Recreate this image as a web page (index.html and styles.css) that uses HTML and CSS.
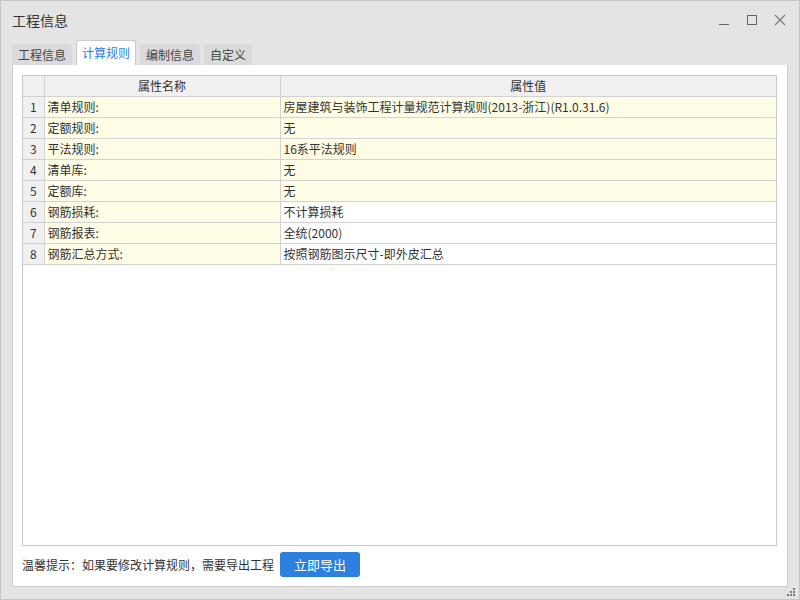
FILE: index.html
```html
<!DOCTYPE html>
<html lang="zh">
<head>
<meta charset="utf-8">
<title>工程信息</title>
<link rel="stylesheet" href="styles.css">
</head>
<body>
<div class="window">
  <div class="titlebar">
    <div class="title">工程信息</div>
    <div class="controls">
      <svg class="ctl" width="12" height="12" viewBox="0 0 12 12"><path d="M1 10.5H11" stroke="#666" stroke-width="1" fill="none"/></svg>
      <svg class="ctl" width="12" height="12" viewBox="0 0 12 12"><rect x="1.5" y="1.5" width="9" height="9" stroke="#666" stroke-width="1" fill="none"/></svg>
      <svg class="ctl" width="12" height="12" viewBox="0 0 12 12"><path d="M1 1L11 11M11 1L1 11" stroke="#777" stroke-width="1.1" fill="none"/></svg>
    </div>
  </div>
  <div class="tabs">
    <div class="tab">工程信息</div>
    <div class="tab active">计算规则</div>
    <div class="tab">编制信息</div>
    <div class="tab">自定义</div>
  </div>
  <div class="panel">
    <div class="grid-box">
      <table class="grid">
        <colgroup><col class="c-num"><col class="c-name"><col class="c-val"></colgroup>
        <thead>
          <tr><th class="num"></th><th>属性名称</th><th>属性值</th></tr>
        </thead>
        <tbody>
          <tr class="hl"><td class="num">1</td><td class="name">清单规则:</td><td class="val">房屋建筑与装饰工程计量规范计算规则(2013-浙江)(R1.0.31.6)</td></tr>
          <tr class="hl"><td class="num">2</td><td class="name">定额规则:</td><td class="val">无</td></tr>
          <tr class="hl"><td class="num">3</td><td class="name">平法规则:</td><td class="val">16系平法规则</td></tr>
          <tr class="hl"><td class="num">4</td><td class="name">清单库:</td><td class="val">无</td></tr>
          <tr class="hl"><td class="num">5</td><td class="name">定额库:</td><td class="val">无</td></tr>
          <tr><td class="num">6</td><td class="name">钢筋损耗:</td><td class="val">不计算损耗</td></tr>
          <tr><td class="num">7</td><td class="name">钢筋报表:</td><td class="val">全统(2000)</td></tr>
          <tr><td class="num">8</td><td class="name">钢筋汇总方式:</td><td class="val">按照钢筋图示尺寸-即外皮汇总</td></tr>
        </tbody>
      </table>
    </div>
    <div class="footer">
      <span class="tip">温馨提示：如果要修改计算规则，需要导出工程</span>
      <button class="btn">立即导出</button>
    </div>
  </div>
  <div class="grip"><i></i><i></i><i></i><i></i><i></i><i></i></div>
</div>
</body>
</html>
```
FILE: styles.css
```css
* { box-sizing: border-box; }
html, body { margin: 0; padding: 0; }
body {
  width: 800px;
  height: 600px;
  font-family: "Noto Sans CJK SC", "Noto Sans", sans-serif;
  color: #333;
  font-size: 12px;
}
.window {
  position: relative;
  width: 800px;
  height: 600px;
  background: #e4e4e4;
  border: 1px solid #c6c6c6;
  display: flex;
  flex-direction: column;
}
.titlebar {
  height: 39px;
  display: flex;
  align-items: center;
  justify-content: space-between;
  padding: 0 13px 0 11px;
}
.title {
  font-size: 14px;
  line-height: 20px;
  color: #333;
  margin-top: -2px;
}
.controls {
  display: flex;
  gap: 16px;
  align-items: center;
  margin-top: -2px;
}
.ctl { display: block; }
.tabs {
  height: 25px;
  display: flex;
  align-items: flex-end;
  gap: 4px;
  padding-left: 11px;
}
.tab {
  height: 21px;
  line-height: 20px;
  padding: 0 5px;
  background: #dadada;
  border: 1px solid transparent;
  border-bottom: none;
  border-radius: 3px 3px 0 0;
  color: #444;
  font-size: 12px;
}
.tab.active {
  height: 25px;
  line-height: 23px;
  background: #fff;
  border-color: #c8c8c8;
  color: #2b7fe0;
}
.panel {
  margin: 0 11px 0 11px;
  background: #fff;
  border: 1px solid #cbcbcb;
  border-top: none;
  height: 522px;
  padding: 10px 10px 0 9px;
  display: flex;
  flex-direction: column;
}
.grid-box {
  height: 471px;
  border: 1px solid #c8c8c8;
  background: #fff;
}
.grid {
  border-collapse: collapse;
  width: 100%;
  table-layout: fixed;
  font-size: 12px;
}
.c-num { width: 21px; }
.c-name { width: 236px; }
.grid th, .grid td {
  height: 21px;
  padding: 0 3px;
  border: 1px solid #d2d2d2;
  white-space: nowrap;
  overflow: hidden;
  line-height: 19px;
}
.grid tr > :first-child { border-left: none; }
.grid tr > :last-child { border-right: none; }
.grid thead th {
  border-top: none;
  background: #f0f0f0;
  font-weight: normal;
  text-align: center;
  color: #333;
  height: 20px;
}
.grid td.num {
  background: #f0f0f0;
  text-align: center;
  padding: 0;
}
.grid td.name { background: #fffde6; }
.grid tr.hl td.val { background: #fffde6; }
.footer {
  height: 40px;
  display: flex;
  align-items: center;
  gap: 6px;
  padding-bottom: 3px;
}
.tip {
  font-size: 12px;
  color: #333;
}
.btn {
  width: 80px;
  height: 25px;
  border: none;
  border-radius: 3px;
  background: #2d80e0;
  color: #fff;
  font-family: inherit;
  font-size: 13px;
  padding: 0;
}
.grip {
  position: absolute;
  right: 3px;
  bottom: 2px;
  width: 9px;
  height: 9px;
  display: grid;
  grid-template-columns: repeat(3, 2px);
  grid-template-rows: repeat(3, 2px);
  gap: 1px;
}
.grip i { background: #777; display: block; }
.grip i:nth-child(1) { grid-column: 3; grid-row: 1; }
.grip i:nth-child(2) { grid-column: 2; grid-row: 2; }
.grip i:nth-child(3) { grid-column: 3; grid-row: 2; }
.grip i:nth-child(4) { grid-column: 1; grid-row: 3; }
.grip i:nth-child(5) { grid-column: 2; grid-row: 3; }
.grip i:nth-child(6) { grid-column: 3; grid-row: 3; }
```
